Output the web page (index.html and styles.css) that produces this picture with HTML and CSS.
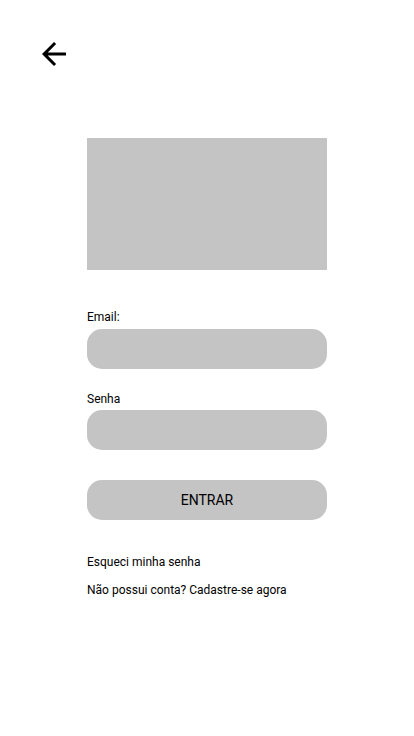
FILE: index.html
```html
<!DOCTYPE html>
<html lang="pt-BR">
<head>
<meta charset="utf-8">
<title>Login</title>
<link rel="stylesheet" href="styles.css">
</head>
<body>
<header class="topbar">
  <button class="back" aria-label="Voltar">
    <svg viewBox="0 0 24 24" width="36" height="36" aria-hidden="true"><path d="M20 11H7.83l5.59-5.59L12 4l-8 8 8 8 1.41-1.41L7.83 13H20v-2z" fill="#000"/></svg>
  </button>
</header>
<main class="content">
  <div class="logo"></div>
  <form class="form">
    <div class="field">
      <label class="label" for="email">Email:</label>
      <input class="input" id="email" type="email">
    </div>
    <div class="field field-gap">
      <label class="label label-tight" for="senha">Senha</label>
      <input class="input" id="senha" type="password">
    </div>
    <button class="submit" type="button">ENTRAR</button>
  </form>
  <div class="links">
    <a class="link" href="#">Esqueci minha senha</a>
    <a class="link" href="#">Não possui conta? Cadastre-se agora</a>
  </div>
</main>
</body>
</html>
```
FILE: styles.css
```css
* { box-sizing: border-box; }
html, body { margin: 0; padding: 0; background: #fff; }
body { font-family: Roboto, "Liberation Sans", sans-serif; color: #000; width: 414px; height: 736px; }
.topbar { padding: 36px 0 0 36px; height: 72px; }
.back { display: block; width: 36px; height: 36px; padding: 0; border: 0; background: none; }
.back svg { display: block; }
.content { width: 240px; margin: 66px auto 0; }
.logo { height: 132px; background: #c4c4c4; }
.form { display: flex; flex-direction: column; margin-top: 40px; }
.field { display: flex; flex-direction: column; }
.field-gap { margin-top: 23px; }
.label { font-size: 12px; line-height: 14px; margin-bottom: 5px; }
.label-tight { margin-bottom: 4px; }
.input { height: 40px; border: 0; border-radius: 15px; background: #c4c4c4; outline: none; }
.submit { margin-top: 30px; height: 40px; border: 0; border-radius: 15px; background: #c4c4c4; font-family: inherit; font-size: 14px; color: #000; padding: 0; }
.links { display: flex; flex-direction: column; gap: 14px; margin-top: 35px; }
.link { font-size: 12px; line-height: 14px; color: #000; text-decoration: none; }
```
